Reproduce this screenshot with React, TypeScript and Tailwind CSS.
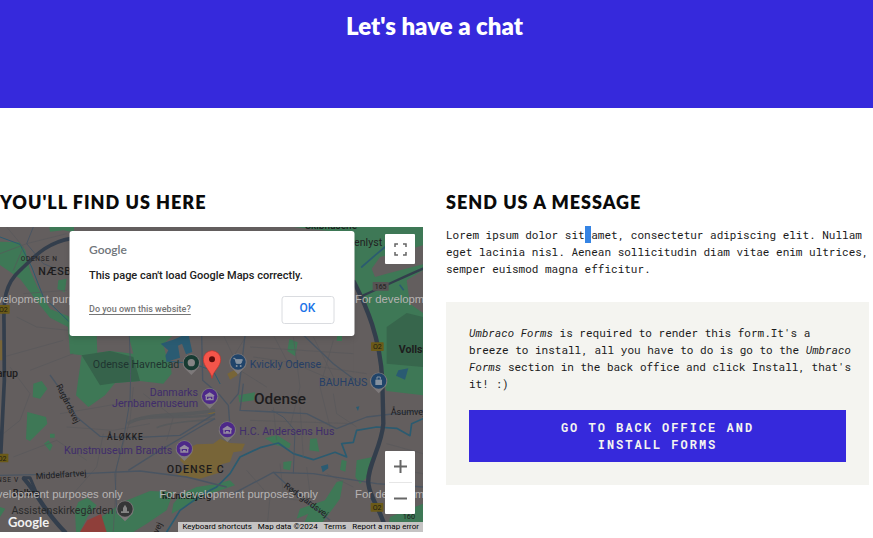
import type { ReactNode } from "react";

type Label = {
  x: number;
  y: number;
  size: number;
  text: string;
  fill?: string;
  weight?: number;
  anchor?: "start" | "middle" | "end";
  rotate?: number;
  spacing?: number;
};

const PURPLE = "#402d6b";
const BLUE = "#263f66";
const DARK = "#1d1c1d";

const labels: Label[] = [
  { x: 62, y: 101, size: 20, text: "ODENSE N", spacing: 2, fill: "#2b292a", weight: 500 },
  { x: 115, y: 143, size: 32, text: "NÆSBY", weight: 500, spacing: 2 },
  { x: 1062, y: 57, size: 32, text: "enlyst", fill: "#222122" },
  { x: 915, y: 5, size: 30, text: "Skibhusene", weight: 500 },
  { x: 1196, y: 377, size: 32, text: "Vollsmose", weight: 700 },
  { x: -10, y: 451, size: 32, text: "arup", weight: 500 },
  { x: 538, y: 424, size: 32, text: "Odense Havnebad", anchor: "end", fill: "#1f3430" },
  { x: 749, y: 424, size: 32, text: "Kvickly Odense", fill: BLUE },
  { x: 1102, y: 478, size: 32, text: "BAUHAUS", anchor: "end", fill: BLUE },
  { x: 594, y: 507, size: 32, text: "Danmarks", anchor: "end", fill: PURPLE },
  { x: 594, y: 540, size: 32, text: "Jernbanemuseum", anchor: "end", fill: PURPLE },
  { x: 718, y: 624, size: 32, text: "H.C. Andersens Hus", fill: PURPLE },
  { x: 517, y: 681, size: 32, text: "Kunstmuseum Brandts", anchor: "end", fill: PURPLE },
  { x: 762, y: 532, size: 46, text: "Odense", weight: 500 },
  { x: 321, y: 639, size: 25, text: "ÅLØKKE", weight: 500, spacing: 3 },
  { x: 500, y: 737, size: 32, text: "ODENSE C", weight: 500, spacing: 3 },
  { x: 1172, y: 565, size: 27, text: "Åsumvej" },
  { x: 108, y: 757, size: 26, text: "Middelfartvej", rotate: -4 },
  { x: -22, y: 766, size: 20, text: "ENSE V", spacing: 2 },
  { x: 168, y: 476, size: 26, text: "Rugårdsvej", rotate: 64 },
  { x: 850, y: 780, size: 26, text: "Rødegårdsvej", rotate: 36 },
  { x: 340, y: 860, size: 32, text: "Assistenskirkegården", anchor: "end", fill: "#2a2b2b" },
  { x: 38, y: 808, size: 28, text: "Bolbro", weight: 500 },
  { x: 486, y: 815, size: 28, text: "Munkebjerg", weight: 500 },
  { x: 1208, y: 875, size: 22, text: "160" },
  { x: 474, y: 920, size: 26, text: "vej", rotate: -65 },
];

function Pin({ x, y, color, children }: { x: number; y: number; color: string; children: ReactNode }) {
  return (
    <g transform={`translate(${x} ${y})`}>
      <path d="M0 37 L-15 22 A26 26 0 1 1 15 22 Z" fill="#7d797a" />
      <circle r="23" fill={color} />
      {children}
    </g>
  );
}

function MuseumPin({ x, y }: { x: number; y: number }) {
  return (
    <Pin x={x} y={y} color="#4d2889">
      <path
        d="M-14 -3 L0 -12 L14 -3 V0 H12 V12 H-12 V0 H-14 Z M-8 1 V8 H-4 V4 H4 V8 H8 V1 Z"
        fill="#948ba0"
        fillRule="evenodd"
      />
    </Pin>
  );
}

function Shield({ x, y }: { x: number; y: number }) {
  return (
    <g>
      <rect x={x - 19} y={y - 13} width="38" height="26" rx="2" fill="#6b5a18" />
      <text x={x} y={y + 8} fontSize="21" textAnchor="middle" fill="#1c1a10">O2</text>
    </g>
  );
}

function MapCanvas() {
  return (
    <svg
      viewBox="0 0 1269 915"
      preserveAspectRatio="xMidYMid slice"
      className="block h-full w-full font-[Roboto,sans-serif]"
      role="img"
      aria-label="Map of Odense"
    >
      <rect width="1269" height="915" fill="#635e5e" />

      {/* parks */}
      <g fill="#3e7856">
        <path d="M0 44 L58 46 L76 70 L90 130 L112 180 L150 246 L206 268 L218 290 L290 324 L292 380 L245 385 L210 380 L204 300 L150 272 L110 222 L60 155 L0 114 Z" />
        <path d="M148 0 H222 V16 L190 10 L150 14 Z" />
        <path d="M175 160 L200 155 L194 196 L172 186 Z" />
        <path d="M385 324 H520 L490 352 L497 380 L510 400 L515 440 L490 470 L420 462 L345 468 L315 505 L265 540 L228 505 L245 385 L330 372 L400 380 Z" />
        <path d="M880 0 H1269 V505 L1160 492 L1140 440 L1130 340 L1100 260 L1065 170 L1060 20 Z" />
        <path d="M868 336 L893 346 L886 388 L862 372 Z M1012 324 H1026 V342 H1010 Z" />
        <path d="M100 470 L125 462 L142 485 L120 515 L98 510 Z M82 555 L138 570 L142 590 L90 642 L78 636 Z M132 650 L145 640 L158 655 L150 672 Z M150 620 H164 V632 H150 Z" />
        <path d="M715 505 L765 496 L762 520 L718 526 Z M795 634 L830 624 L872 650 L868 664 L830 655 Z M930 636 L950 634 L958 674 L928 670 Z M850 705 L875 702 L870 730 L850 726 Z M1025 698 L1040 702 L1036 734 L1020 728 Z M1070 700 L1118 690 L1102 750 L1080 770 L1066 750 Z" />
        <path d="M225 850 L235 825 L262 812 L290 835 L262 870 L240 915 H228 Z M370 824 L450 792 L520 795 L500 850 L440 890 L400 915 H315 L305 870 Z" />
        <path d="M545 800 L590 780 L645 772 L690 760 L705 775 L630 800 L570 830 L515 860 L520 830 Z" />
        <path d="M1010 765 L1030 760 L1020 815 L980 870 L945 915 H900 L925 860 L890 875 L900 845 L975 820 Z" />
        <path d="M0 840 L16 845 L0 870 Z M1170 870 L1269 830 V915 H1160 Z" />
      </g>
      <path d="M245 385 L330 372 L400 390 L420 462 L345 468 L300 475 Z" fill="#36634b" />
      <path d="M1160 300 L1220 258 L1269 270 V420 L1160 410 Z" fill="#37664c" />

      {/* built-up and special areas */}
      <g fill="#635e5e">
        <path d="M1269 55 L1200 75 L1140 90 L1115 125 L1125 150 L1160 140 L1269 112 Z" />
        <path d="M1220 160 L1269 130 V258 L1230 230 Z" />
        <path d="M1060 324 H1125 L1140 440 H1060 Z" />
      </g>
      <path d="M540 700 L550 670 L590 652 L640 650 L660 635 L690 648 L735 650 L725 672 L700 676 L690 705 L665 712 L655 738 L600 755 L530 745 L560 720 Z M0 340 H8 V400 H0 Z M682 440 L710 425 L712 445 L690 458 Z M625 553 H645 V562 H625 Z" fill="#786538" />
      <path d="M240 915 L262 880 L303 861 L320 915 Z" fill="#8f3f3a" />
      <g fill="none" stroke="#585a5c" strokeWidth="10">
        <path d="M382 590 C440 555 540 570 645 550" />
        <path d="M400 580 C470 560 560 580 645 562" strokeWidth="7" />
        <path d="M470 602 C520 580 590 585 645 575" strokeWidth="5" />
      </g>

      {/* water */}
      <g fill="#2a5b72">
        <path d="M482 350 L520 338 L552 324 H566 L577 375 L558 382 L546 350 L534 356 L540 392 L500 404 L496 386 L505 370 Z" />
        <path d="M1195 430 L1225 424 L1215 458 L1188 446 Z M963 718 L984 712 L985 724 L968 736 Z M1068 540 L1078 538 L1074 552 Z" />
      </g>
      <g fill="none" stroke="#2b5b70" strokeWidth="5" strokeLinecap="round" strokeLinejoin="round">
        <path d="M500 402 L580 410 L640 432 L660 470" strokeWidth="3" />
        <path d="M500 915 L540 850 L610 800 L650 780 L690 740 L720 690 L780 662 L835 648 L880 680 L940 698 L1005 676 L1040 690 L1025 650 L1060 646 L1070 610 L1130 600 L1190 604 L1230 626 L1235 590 L1269 575" />
        <path d="M0 30 L60 52 L95 120 L130 210 L205 282" strokeWidth="3" />
        <path d="M1085 120 L1125 85 L1155 60 M1200 175 L1210 188" />
      </g>

      {/* minor streets */}
      <g fill="none" stroke="#58575a" strokeWidth="2">
        <path d="M0 80 L80 50 L200 20 M20 0 L70 60 L40 130 M70 200 L200 190 M50 270 L110 300 L205 310 M10 390 L190 340 M30 420 L90 500 L60 580 L10 620 M90 430 L220 380 M180 560 L300 540 L410 520 M200 600 L340 610 L450 590 M40 690 L170 640 L260 700 M310 620 L290 720 L220 800 M400 480 L390 580 L350 720 L340 915 M430 500 L520 570 L500 640" />
        <path d="M670 324 L720 430 L800 480 M740 324 L700 390 M820 324 L860 400 L1000 460 M750 360 L1060 380 M760 390 L1100 440 M880 330 L900 480 L870 600 M940 330 L1010 470 M1000 340 L960 480 L990 600 M820 540 L830 640 M900 540 L910 690 M1000 500 L1010 560 L1070 600 M750 580 L1060 590 M740 730 L810 810 L800 915 M840 710 L850 800 M920 720 L930 800 M980 740 L1060 780 M730 800 L900 820 M1160 650 L1269 680 M1160 720 L1269 740" />
      </g>
      <g fill="none" stroke="#4a5562" strokeWidth="4" strokeLinejoin="round">
        <path d="M150 444 L190 500 L230 570 L300 628 L400 632 L540 625 L645 560" />
        <path d="M0 745 L250 740 L420 732 L560 750 L680 780" />
        <path d="M385 730 L480 670 L600 600 L645 575" />
        <path d="M388 324 L392 440 L390 520 L370 640 L345 740 L350 860" strokeWidth="3" />
        <path d="M605 324 L608 460 L660 505 L685 535 L690 600 L690 640" />
        <path d="M735 324 L722 440 L715 500 L690 530" />
        <path d="M730 470 L720 550 L820 555 L920 560 L1010 605 L1100 570 L1269 550" />
        <path d="M815 550 L850 570 L885 610 L880 740" strokeWidth="3" />
        <path d="M700 800 L820 736 L940 740 L1130 770 L1269 780" />
        <path d="M820 736 L900 810 L990 880" />
        <path d="M910 324 L1000 410 L1080 470" />
        <path d="M100 0 L80 50 L130 110 L205 140" strokeWidth="3" />
      </g>

      {/* motorways */}
      <g fill="none" stroke="#333e4c" strokeLinecap="round" strokeLinejoin="round">
        <path d="M215 34 C130 48 95 100 60 130 C15 170 10 220 12 290 L13 460 L2 690" strokeWidth="11" />
        <path d="M1062 165 C1100 240 1140 330 1147 460 L1150 590 C1145 660 1100 720 1105 770 C1112 820 1140 840 1160 915" strokeWidth="13" />
        <path d="M72 755 C120 810 130 850 195 915" strokeWidth="13" />
        <path d="M70 752 H90 L115 810" strokeWidth="9" />
        <path d="M1090 205 C1160 175 1210 150 1269 125" strokeWidth="7" />
      </g>

      {labels.map((l) => (
        <text
          key={l.text}
          x={l.x}
          y={l.y}
          fontSize={l.size}
          fontWeight={l.weight ?? 400}
          textAnchor={l.anchor ?? "start"}
          fill={l.fill ?? DARK}
          letterSpacing={l.spacing ?? 0}
          transform={l.rotate ? `rotate(${l.rotate} ${l.x} ${l.y})` : undefined}
        >
          {l.text}
        </text>
      ))}

      <Shield x={10} y={247} />
      <Shield x={1132} y={359} />
      <Shield x={6} y={693} />
      <Shield x={1131} y={841} />
      <rect x="1118" y="165" width="48" height="26" rx="2" fill="#575354" />
      <text x="1142" y="186" fontSize="21" textAnchor="middle" fill="#1c1b1b">165</text>

      <Pin x={574} y={407} color="#173b32">
        <circle r="11" fill="#858585" />
      </Pin>
      <Pin x={714} y={405} color="#20446a">
        <path d="M-14 -11 H-9 L-5 4 H9 L13 -7 H-8" fill="#8592a0" stroke="#8592a0" strokeWidth="3" />
        <circle cx="-4" cy="12" r="3" fill="#8592a0" />
        <circle cx="8" cy="12" r="3" fill="#8592a0" />
      </Pin>
      <Pin x={1136} y={462} color="#20446a">
        <path d="M-10 -4 H10 V12 H-10 Z" fill="#8592a0" />
        <path d="M-5 -4 V-12 H5 V-4" fill="none" stroke="#8592a0" strokeWidth="3" />
      </Pin>
      <MuseumPin x={629} y={508} />
      <MuseumPin x={682} y={608} />
      <MuseumPin x={553} y={665} />
      <Pin x={375} y={846} color="#353637">
        <path d="M-12 12 V7 H-6 V-3 L0 -13 L6 -3 V7 H12 V12 Z" fill="#858585" />
      </Pin>

      <g transform="translate(636 400)">
        <path d="M0 54 C-3 32 -26 20 -26 -3 A26 26 0 0 1 26 -3 C26 20 3 32 0 54 Z" fill="#f4554a" stroke="#c5302a" strokeWidth="2" />
        <circle cy="-3" r="9" fill="#5c0d0b" />
      </g>

      <g fontSize="34" fill="#b6b3b3" className="font-['Liberation_Sans',Arial,sans-serif]">
        {[-108, 478, 1065].map((x) =>
          [229, 813].map((y) => (
            <text key={`${x}-${y}`} x={x} y={y}>For development purposes only</text>
          )),
        )}
      </g>
    </svg>
  );
}

function MapPanel() {
  return (
    <div className="relative h-[305px] overflow-hidden font-[Roboto,sans-serif]">
      <MapCanvas />

      <div
        role="dialog"
        aria-label="Google Maps notice"
        className="absolute top-1 left-1/2 flex h-[105px] w-[285px] -translate-x-1/2 flex-col rounded-[3px] bg-white px-5 pt-[9px] shadow-md"
      >
        <p className="font-[Lato,sans-serif] text-xs leading-5 font-semibold text-[#70757a]">Google</p>
        <p className="mt-1.5 text-[11px] leading-5 font-medium text-[#212121]">This page can't load Google Maps correctly.</p>
        <div className="mt-2.5 flex items-center justify-between">
          <a href="#owner" className="text-[9px] font-medium text-[#757575] underline underline-offset-2">Do you own this website?</a>
          <button type="button" className="h-7 w-[53px] rounded-[3px] border border-[#dadce0] pb-1 text-xs leading-5 font-medium text-[#1a73e8]">
            OK
          </button>
        </div>
      </div>

      <button
        type="button"
        aria-label="Toggle fullscreen view"
        className="absolute top-[7px] right-2 flex size-[30px] items-center justify-center rounded-[1px] bg-white"
      >
        <svg viewBox="0 0 13 13" className="size-[13px]" fill="none" stroke="#666" strokeWidth="1.5">
          <path d="M1 4V1H4 M9 1H12V4 M12 9V12H9 M4 12H1V9" />
        </svg>
      </button>

      <div className="absolute right-2 bottom-[18px] flex w-[30px] flex-col items-center rounded-[1px] bg-white">
        <button type="button" aria-label="Zoom in" className="flex h-[31px] w-full items-center justify-center">
          <svg viewBox="0 0 13 13" className="size-[13px]" stroke="#666" strokeWidth="2">
            <path d="M0 6.5H13M6.5 0V13" />
          </svg>
        </button>
        <div className="h-px w-[23px] bg-[#e6e6e6]" />
        <button type="button" aria-label="Zoom out" className="flex h-[31px] w-full items-center justify-center">
          <svg viewBox="0 0 13 13" className="size-[13px]" stroke="#666" strokeWidth="2">
            <path d="M0 6.5H13" />
          </svg>
        </button>
      </div>

      <a href="#google" className="absolute bottom-0 left-2 font-[Lato,sans-serif] text-[13px] leading-5 font-bold text-[#f1f1f1]">
        Google
      </a>
      <div className="absolute right-0 bottom-0 flex h-2.5 items-center gap-1.5 bg-[#c6c4c4] px-1 text-[8px] leading-none whitespace-nowrap text-black">
        <button type="button">Keyboard shortcuts</button>
        <span>Map data ©2024</span>
        <a href="#terms">Terms</a>
        <a href="#report">Report a map error</a>
      </div>
    </div>
  );
}

function SectionTitle({ children }: { children: ReactNode }) {
  return <h2 className="font-[Lato,sans-serif] text-lg leading-6 font-extrabold tracking-[1px] text-[#0a0a0a]">{children}</h2>;
}

export default function App() {
  return (
    <div className="overflow-x-hidden bg-white">
      <header className="h-27 bg-[#3629dc] pt-2.5 pr-1 text-center">
        <h1 className="font-[Lato,sans-serif] text-2xl leading-8 font-extrabold text-white">Let's have a chat</h1>
      </header>

      <main className="grid grid-cols-2 gap-[23px] pt-[82px] pr-1">
        <section>
          <SectionTitle>YOU'LL FIND US HERE</SectionTitle>
          <div className="mt-[13px]">
            <MapPanel />
          </div>
        </section>

        <section className="font-['Roboto_Mono','Liberation_Mono',monospace] text-[11px] leading-[17px] text-[#1b1b1b]">
          <SectionTitle>SEND US A MESSAGE</SectionTitle>
          <p className="mt-3">
            Lorem ipsum dolor sit<span className="bg-[#3584e4] py-px"> </span>amet, consectetur adipiscing elit. Nullam eget lacinia nisl. Aenean
            sollicitudin diam vitae enim ultrices, semper euismod magna efficitur.
          </p>
          <div className="mt-[25px] bg-[#f4f4f0] px-[23px] pt-[22px] pb-[23px]">
            <p className="-mr-2">
              <em>Umbraco Forms</em> is required to render this form.It's a breeze to install, all you have to do is go to the{" "}
              <em>Umbraco Forms</em> section in the back office and click Install, that's it! :)
            </p>
            <button
              type="button"
              className="mt-[18px] w-full bg-[#3629dc] px-20 py-[9px] text-xs leading-[17px] font-bold tracking-[2px] text-[#f4f4f0]"
            >
              GO TO BACK OFFICE AND INSTALL FORMS
            </button>
          </div>
        </section>
      </main>
    </div>
  );
}
